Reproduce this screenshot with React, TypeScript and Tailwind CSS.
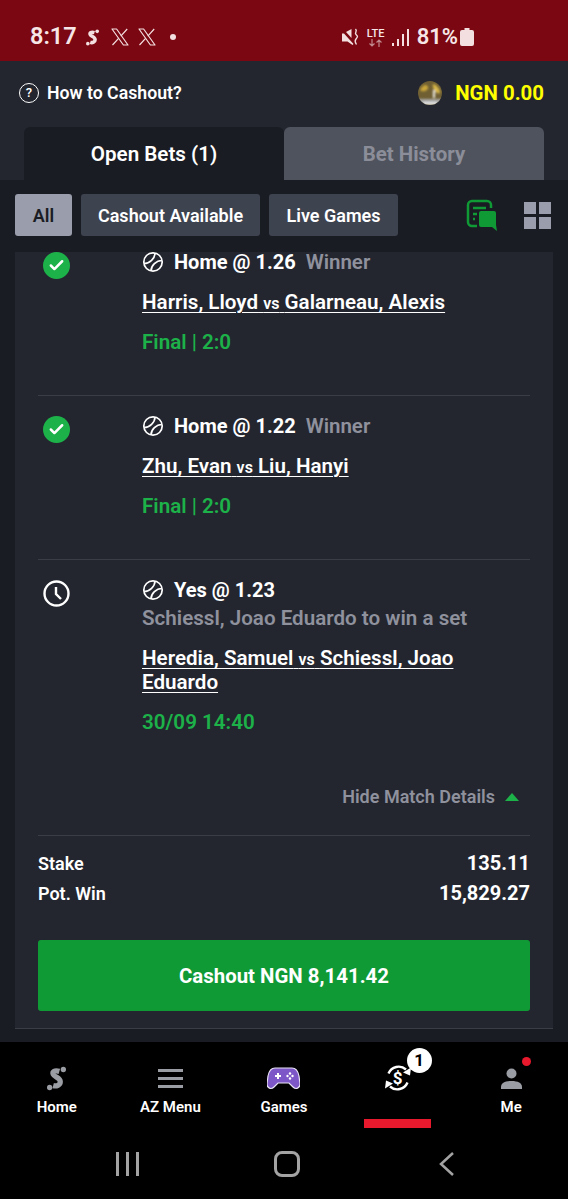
import { Check } from "lucide-react";

function TennisBall() {
  return (
    <svg width="22" height="22" viewBox="0 0 22 22" fill="none" stroke="#fff" strokeWidth="1.700" className="shrink-0">
      <circle cx="11" cy="11" r="9.200" />
      <path d="M2.200 12.500C7.500 12.500 13 7.500 13 2" />
      <path d="M19.800 9.500C14.500 9.500 9 14.500 9 20" />
    </svg>
  );
}

function XLogo() {
  return (
    <svg width="18" height="18" viewBox="0 0 18 18" fill="none" stroke="#f3dfe0" strokeWidth="1.200" strokeLinejoin="round">
      <path d="M1 1h4.600l11.400 16h-4.600z" />
      <path d="M16.200 1l-6.400 7.200M7.600 10.400L1.500 17" />
    </svg>
  );
}

function SLogo({ color, width, height }: { color: string; width: number; height: number }) {
  return (
    <svg width={width} height={height} viewBox="0 0 20 26" fill={color}>
      <path d="M13 5.500C8 4 5.500 6 6.500 8.500C8 12 14 11.500 14 16.500C14 20 10 21.500 6.500 20.500" fill="none" stroke={color} strokeWidth="5.500" />
      <circle cx="17.200" cy="3.500" r="2.800" />
      <circle cx="2.800" cy="22.500" r="2.800" />
    </svg>
  );
}

function StatusBar() {
  return (
    <div className="flex h-[61px] items-center justify-between bg-[#7a0711] pl-[30px] pr-[94px] pt-[13px] text-[#f6e6e7]">
      <div className="flex items-center">
        <span className="text-[23.500px] font-semibold leading-none">8:17</span>
        <span className="ml-[9px] flex">
          <SLogo color="#f3dfe0" width={13} height={17} />
        </span>
        <span className="ml-[12px] flex">
          <XLogo />
        </span>
        <span className="ml-[9px] flex">
          <XLogo />
        </span>
        <span className="ml-[14px] h-[6px] w-[6px] rounded-full bg-[#f3dfe0]" />
      </div>
      <div className="flex items-center">
        <svg width="18" height="18" viewBox="0 0 18 18" fill="#f3dfe0">
          <path d="M1 5.500h2l9.500 10.500-1 1-5-3.500H1z" />
          <path d="M5 4l5.500-3v9z" />
          <path d="M1.500 1.500l12 14" stroke="#7a0711" strokeWidth="1" />
          <path d="M14.500 1c2.500 2.500-1.500 3.500.5 5.500s2 2 0 4.500 -.5 3.500.5 5.500" fill="none" stroke="#f3dfe0" strokeWidth="1.400" />
        </svg>
        <div className="ml-[8px] flex w-[18px] flex-col items-center">
          <span className="text-[11px] font-medium leading-[11px]">LTE</span>
          <svg width="15" height="8" viewBox="0 0 15 8" fill="none" stroke="#c08a8e" strokeWidth="1.200">
            <path d="M4 0v7M1.500 4.500L4 7l2.500-2.500M11 8V1M8.500 3.500L11 1l2.500 2.500" />
          </svg>
        </div>
        <svg width="17" height="17" viewBox="0 0 17 17" fill="#f3dfe0" className="ml-[7px]">
          <rect x="0" y="14" width="2" height="3" />
          <rect x="5" y="10" width="2" height="7" />
          <rect x="10" y="5" width="2" height="12" />
          <rect x="15" y="0" width="2" height="17" />
        </svg>
        <span className="ml-[8px] text-[22px] font-semibold leading-none">81%</span>
        <svg width="14" height="18" viewBox="0 0 14 18" fill="#f3dfe0" className="ml-[2px]">
          <path d="M4.500 0h5v2h2.500a2 2 0 0 1 2 2v12a2 2 0 0 1-2 2H2a2 2 0 0 1-2-2V4a2 2 0 0 1 2-2h2.500z" />
        </svg>
      </div>
    </div>
  );
}

function Header() {
  return (
    <div className="flex h-[66px] items-center justify-between bg-[#23262f] pb-[2px] pl-[19px] pr-[24px]">
      <div className="flex items-center">
        <span className="flex h-[20px] w-[20px] items-center justify-center rounded-full border-[1.500px] border-white text-[13px] font-medium text-white">
          ?
        </span>
        <span className="ml-[8px] text-[17.700px] font-semibold text-white">How to Cashout?</span>
      </div>
      <div className="flex items-center">
        <svg width="24" height="24" viewBox="0 0 24 24">
          <defs>
            <filter id="soft">
              <feGaussianBlur stdDeviation="0.800" />
            </filter>
            <clipPath id="coin">
              <circle cx="12" cy="12" r="12" />
            </clipPath>
          </defs>
          <g clipPath="url(#coin)">
            <rect width="24" height="24" fill="#6f5f33" />
            <g filter="url(#soft)">
              <path d="M2 9c3-6 7-6 8-3s-5 6-8 3z" fill="#c9a63a" />
              <path d="M15 3c4 1 7 5 7 9-4 2-8-5-7-9z" fill="#d8b848" />
              <rect x="15" y="9" width="2" height="8" fill="#f1efe8" />
              <rect x="0" y="18" width="24" height="6" fill="#a8a8a8" />
              <rect x="5" y="21" width="14" height="3" fill="#e4e4e4" />
            </g>
          </g>
        </svg>
        <span className="ml-[13px] text-[20.400px] font-bold text-[#ffff00]">NGN 0.00</span>
      </div>
    </div>
  );
}

function Tabs() {
  return (
    <div className="flex h-[53px] bg-[#23262f] px-[24px]">
      <div className="flex flex-1 items-center justify-center rounded-t-[6px] bg-[#1a1c23] pt-[2px] text-[20.600px] font-semibold text-white">
        Open Bets (1)
      </div>
      <div className="flex flex-1 items-center justify-center rounded-t-[6px] bg-[#4f535d] pt-[2px] text-[20.400px] font-bold text-[#8b8e99]">
        Bet History
      </div>
    </div>
  );
}

function Filters() {
  return (
    <div className="flex h-[72px] items-center bg-[#1a1c23] pb-[2px] pl-[15px] pr-[17px]">
      <div className="flex h-[42px] w-[57px] items-center justify-center rounded-[3px] bg-[#9a9dab] text-[18px] font-semibold text-[#1a1c23]">
        All
      </div>
      <div className="ml-[9px] flex h-[42px] w-[179px] items-center justify-center rounded-[3px] bg-[#3e4350] text-[18px] font-semibold text-white">
        Cashout Available
      </div>
      <div className="ml-[9px] flex h-[42px] w-[129px] items-center justify-center rounded-[3px] bg-[#3e4350] text-[18px] font-semibold text-white">
        Live Games
      </div>
      <svg width="31" height="32" viewBox="0 0 31 32" fill="none" className="ml-[68px] shrink-0">
        <path d="M25 9V6a4 4 0 0 0-4-4H6a4 4 0 0 0-4 4v17a4 4 0 0 0 4 4h5" stroke="#0f9a36" strokeWidth="2.500" />
        <path d="M7 9h13" stroke="#0f9a36" strokeWidth="2.500" />
        <path d="M7 15h4M7 20h2" stroke="#0f9a36" strokeWidth="2.500" />
        <path d="M13 14a2 2 0 0 1 2-2h13a2 2 0 0 1 2 2v12l1 6-5-4H15a2 2 0 0 1-2-2z" fill="#0f9a36" />
      </svg>
      <div className="ml-[27px] grid shrink-0 grid-cols-2 gap-[3px]">
        <span className="h-[12px] w-[12px] bg-[#9a9dab]" />
        <span className="h-[12px] w-[12px] bg-[#9a9dab]" />
        <span className="h-[12px] w-[12px] bg-[#9a9dab]" />
        <span className="h-[12px] w-[12px] bg-[#9a9dab]" />
      </div>
    </div>
  );
}

function Leg({
  done,
  pick,
  market,
  inlineMarket,
  home,
  away,
  status,
  rowClass,
}: {
  done: boolean;
  pick: string;
  market: string;
  inlineMarket: boolean;
  home: string;
  away: string;
  status: string;
  rowClass: string;
}) {
  return (
    <div className={`flex ${rowClass}`}>
      <div className="w-[104px] shrink-0 pl-[5px]">
        {done ? (
          <span className="flex h-[27px] w-[27px] items-center justify-center rounded-full bg-[#1db249]">
            <Check size={17} color="#fff" strokeWidth={3.500} />
          </span>
        ) : (
          <svg width="27" height="27" viewBox="0 0 27 27" fill="none" stroke="#fff" strokeWidth="2.400">
            <circle cx="13.500" cy="13.500" r="12" />
            <path d="M13 7v7l5 5" />
          </svg>
        )}
      </div>
      <div className="min-w-0 flex-1">
        <div className="flex h-[20px] items-center">
          <TennisBall />
          <span className="ml-[10px] text-[20px] font-bold leading-none text-white">{pick}</span>
          {inlineMarket && <span className="ml-[10px] text-[20.500px] font-semibold leading-none text-[#8f919d]">{market}</span>}
        </div>
        {!inlineMarket && <div className="mt-[6px] text-[20.600px] font-semibold leading-[24px] text-[#8f919d]">{market}</div>}
        <div className={`${inlineMarket ? "mt-[18px]" : "mt-[16px]"} pr-[8px] text-[20.600px] font-semibold leading-[24px] text-white`}>
          <span className="underline decoration-1 underline-offset-[3px]">
            {home} <span className="text-[16px] leading-none">vs</span> {away}
          </span>
        </div>
        <div className="mt-[16px] text-[20.600px] font-semibold leading-[24px] text-[#1db249]">{status}</div>
      </div>
    </div>
  );
}

function Card() {
  return (
    <div className="mx-[15px] h-[777px] border-b border-[#3a3d46] bg-[#23262f] px-[23px]">
      <Leg
        rowClass="h-[144px] border-b border-[#3a3d46]"
        done
        pick="Home @ 1.26"
        market="Winner"
        inlineMarket
        home="Harris, Lloyd"
        away="Galarneau, Alexis"
        status="Final | 2:0"
      />
      <Leg
        rowClass="h-[164px] border-b border-[#3a3d46] pt-[20px]"
        done
        pick="Home @ 1.22"
        market="Winner"
        inlineMarket
        home="Zhu, Evan"
        away="Liu, Hanyi"
        status="Final | 2:0"
      />
      <Leg
        rowClass="pt-[20px]"
        done={false}
        pick="Yes @ 1.23"
        market="Schiessl, Joao Eduardo to win a set"
        inlineMarket={false}
        home="Heredia, Samuel"
        away="Schiessl, Joao Eduardo"
        status="30/09 14:40"
      />
      <div className="mt-[51px] flex items-center justify-end pr-[11px]">
        <span className="text-[18px] font-semibold leading-[24px] text-[#8f919d]">Hide Match Details</span>
        <span className="ml-[10px] h-0 w-0 border-x-[7.500px] border-b-[8px] border-x-transparent border-b-[#1db249]" />
      </div>
      <div className="mt-[26px] border-t border-[#3a3d46] pt-[12px]">
        <div className="flex h-[30px] items-center justify-between">
          <span className="text-[18px] font-semibold text-white">Stake</span>
          <span className="text-[20px] font-bold text-white">135.11</span>
        </div>
        <div className="flex h-[30px] items-center justify-between">
          <span className="text-[18px] font-semibold text-white">Pot. Win</span>
          <span className="text-[20px] font-bold text-white">15,829.27</span>
        </div>
      </div>
      <div className="mt-[32px] flex h-[71px] items-center justify-center rounded-[3px] bg-[#0f9a36] pt-[2px] text-[20.400px] font-bold text-white">
        Cashout NGN 8,141.42
      </div>
    </div>
  );
}

function NavItem({ label, active, children }: { label: string; active?: boolean; children: React.ReactNode }) {
  return (
    <div className="relative flex flex-1 flex-col items-center">
      <div className="mt-[21px] flex h-[30px] items-center justify-center">{children}</div>
      <span className="mt-[5px] h-[18px] text-[15px] font-semibold leading-[18px] text-white">{label}</span>
      {active && <span className="absolute bottom-px h-[9px] w-[67px] bg-[#e8192c]" />}
    </div>
  );
}

function BottomNav() {
  return (
    <div className="h-[157px] bg-black">
      <div className="flex h-[87px]">
        <NavItem label="Home">
          <SLogo color="#9a9da3" width={19} height={25} />
        </NavItem>
        <NavItem label="AZ Menu">
          <div className="flex flex-col gap-[5px]">
            <span className="h-[3px] w-[25px] bg-[#9a9da3]" />
            <span className="h-[3px] w-[25px] bg-[#9a9da3]" />
            <span className="h-[3px] w-[25px] bg-[#9a9da3]" />
          </div>
        </NavItem>
        <NavItem label="Games">
          <svg width="33" height="23" viewBox="0 0 33 23">
            <path d="M8 1h17c4 0 6 3 7 8l1 8c0 4-4 6-7 3l-4-4H11l-4 4c-3 3-7 1-7-3l1-8C2 4 4 1 8 1z" fill="#7d57c7" stroke="#e8e2f5" strokeWidth="1.200" />
            <path d="M8 9h6M11 6v6" stroke="#fff" strokeWidth="2" />
            <circle cx="23" cy="6.500" r="1.200" fill="#fff" />
            <circle cx="23" cy="11.500" r="1.200" fill="#fff" />
            <circle cx="20.500" cy="9" r="1.200" fill="#fff" />
            <circle cx="25.500" cy="9" r="1.200" fill="#fff" />
          </svg>
        </NavItem>
        <NavItem label="" active>
          <div className="relative">
            <svg width="30" height="30" viewBox="0 0 30 30" fill="none" stroke="#fff" strokeWidth="2.400">
              <path d="M5.500 10.500A11 11 0 0 1 23 6.500" />
              <path d="M24.500 19.500A11 11 0 0 1 7 23.500" />
              <path d="M28 4.500l-1 8-7-3z" fill="#fff" stroke="none" />
              <path d="M2 25.500l1-8 7 3z" fill="#fff" stroke="none" />
            </svg>
            <span className="absolute inset-0 flex items-center justify-center text-[17px] font-bold leading-none text-white">$</span>
            <span className="absolute left-[24px] top-[-15px] flex h-[25px] w-[25px] items-center justify-center rounded-full bg-white text-[17px] font-bold text-black">
              1
            </span>
          </div>
        </NavItem>
        <NavItem label="Me">
          <div className="relative">
            <svg width="21" height="21" viewBox="0 0 21 21" fill="#9a9da3">
              <circle cx="10.500" cy="5.500" r="5" />
              <path d="M0 21v-2c0-4 4-6 10.500-6s10.500 2 10.500 6v2z" />
            </svg>
            <span className="absolute left-[21px] top-[-11px] h-[9px] w-[9px] rounded-full bg-[#e8192c]" />
          </div>
        </NavItem>
      </div>
      <div className="flex h-[70px] items-start pl-[116px] pt-[22px]">
        <div className="flex h-[26px] items-center gap-[7px]">
          <span className="h-[24px] w-[3px] bg-[#a3a3a3]" />
          <span className="h-[24px] w-[3px] bg-[#a3a3a3]" />
          <span className="h-[24px] w-[3px] bg-[#a3a3a3]" />
        </div>
        <span className="ml-[135px] h-[26px] w-[26px] rounded-[8px] border-[3px] border-[#a3a3a3]" />
        <svg width="15" height="24" viewBox="0 0 15 24" fill="none" stroke="#a3a3a3" strokeWidth="2.500" className="ml-[139px] mt-px">
          <path d="M14 1L2 12l12 11" />
        </svg>
      </div>
    </div>
  );
}

export default function App() {
  return (
    <div className="h-[1199px] w-[568px] overflow-hidden bg-[#1a1c23] font-['Roboto',sans-serif]">
      <StatusBar />
      <Header />
      <Tabs />
      <Filters />
      <Card />
      <div className="h-[13px]" />
      <BottomNav />
    </div>
  );
}
